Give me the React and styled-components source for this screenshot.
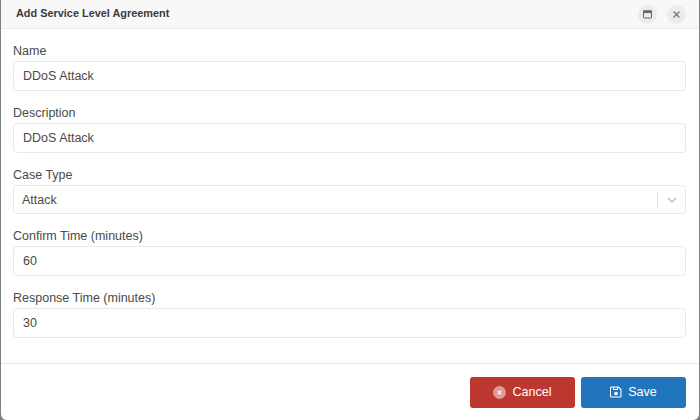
import React from "react";
import styled, { createGlobalStyle } from "styled-components";

const Global = createGlobalStyle`
  html, body { margin: 0; height: 100%; background: #7f7f7f; overflow: hidden; }
  * { box-sizing: border-box; }
`;
const Page = styled.div`
  width: 700px; height: 420px; padding: 0 1px;
  font-family: "Liberation Sans", Arial, sans-serif;
`;
const Modal = styled.div`
  height: 420px; background: #fff; border-radius: 0 0 6px 6px;
  display: flex; flex-direction: column; overflow: hidden;
`;
const Header = styled.div`
  height: 29px; background: #f8f8f8; border-bottom: 1px solid #ececec;
  display: flex; align-items: center; gap: 10px; padding: 0 13px 0 15px;
`;
const Title = styled.div`
  flex: 1; font-size: 10.9px; font-weight: 700; color: #3b3b3b; margin-top: -2px;
`;
const RoundBtn = styled.button`
  width: 19px; height: 19px; border: 0; padding: 0; border-radius: 50%;
  background: #ececec; color: #666; display: flex; align-items: center; justify-content: center;
`;
const Body = styled.div`
  flex: 1; padding: 12px 13px 0 12px; display: flex; flex-direction: column; gap: 12px;
`;
const Field = styled.div``;
const Label = styled.div`
  font-size: 12.5px; line-height: 19px; padding-top: 1px; color: #4a4a4a;
`;
const Input = styled.div`
  height: 30px; border: 1px solid #e6e9ee; border-radius: 4px; background: #fff;
  padding: 0 9px; display: flex; align-items: center;
  font-size: 12.5px; color: #4a4a4a;
`;
const Select = styled(Input)`
  height: 29px; padding: 0 8px; justify-content: space-between;
`;
const Sep = styled.span`
  width: 1px; height: 16px; background: #dcdcdc; margin-right: 9px;
`;
const SelectRight = styled.div`
  display: flex; align-items: center;
`;
const Footer = styled.div`
  height: 57px; border-top: 1px solid #e4e4e4; display: flex; justify-content: flex-end;
  align-items: flex-start; gap: 6px; padding: 12.5px 13px 0 0;
`;
const Button = styled.button`
  width: 105px; height: 31px; border: 0; border-radius: 3px;
  background: ${p => p.$bg}; color: #fff; font: 12.6px "Liberation Sans", Arial, sans-serif;
  display: flex; align-items: center; justify-content: center; gap: 6px; padding: 0;
`;

export default function App() {
  return (
    <Page>
      <Global />
      <Modal>
        <Header>
          <Title>Add Service Level Agreement</Title>
          <RoundBtn>
            <svg width="11" height="11" viewBox="0 0 11 11" fill="none" stroke="#666" strokeWidth="1">
              <rect x="1.5" y="2" width="8" height="7" rx="0.5" />
              <rect x="1.5" y="2" width="8" height="1.6" fill="#666" />
            </svg>
          </RoundBtn>
          <RoundBtn>
            <svg width="9" height="9" viewBox="0 0 9 9" fill="none" stroke="#777" strokeWidth="1.3">
              <path d="M1.5 1.5l6 6M7.5 1.5l-6 6" />
            </svg>
          </RoundBtn>
        </Header>
        <Body>
          <Field><Label>Name</Label><Input>DDoS Attack</Input></Field>
          <Field><Label>Description</Label><Input>DDoS Attack</Input></Field>
          <Field>
            <Label>Case Type</Label>
            <Select>
              Attack
              <SelectRight>
                <Sep />
                <svg width="10" height="10" viewBox="0 0 12 12" fill="none" stroke="#c8c8c8" strokeWidth="2">
                  <path d="M1 3.500l5 5 5-5" />
                </svg>
              </SelectRight>
            </Select>
          </Field>
          <Field><Label>Confirm Time (minutes)</Label><Input>60</Input></Field>
          <Field><Label>Response Time (minutes)</Label><Input>30</Input></Field>
        </Body>
        <Footer>
          <Button $bg="#bd3630">
            <svg width="13" height="13" viewBox="0 0 13 13">
              <circle cx="6.5" cy="6.5" r="6.5" fill="#de9a97" />
              <path d="M4.7 4.7l3.6 3.6M8.3 4.7l-3.6 3.6" stroke="#fff" strokeWidth="1.1" />
            </svg>
            Cancel
          </Button>
          <Button $bg="#2175bd">
            <svg width="12" height="12" viewBox="0 0 12 12" fill="none" stroke="#fff" strokeWidth="1.1">
              <path d="M1.5 1h7l2.5 2.5v6.5a1 1 0 0 1-1 1h-8.500a1 1 0 0 1-1-1v-8a1 1 0 0 1 1-1z" />
              <path d="M3.500 1v2.500h4V1" />
              <circle cx="6" cy="7.500" r="1.300" fill="#fff" />
            </svg>
            Save
          </Button>
        </Footer>
      </Modal>
    </Page>
  );
}
